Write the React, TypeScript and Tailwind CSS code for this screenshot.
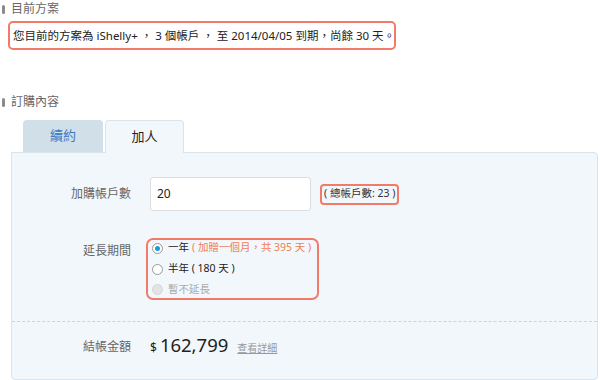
import React from 'react';

const font = { fontFamily: '"Noto Sans", "Noto Sans CJK TC", sans-serif' };

const SectionTitle = ({ children }: { children: React.ReactNode }) => (
  <div className="flex items-center gap-[6px] h-[16px]">
    <span className="w-[3px] h-[9px] rounded-full bg-[#8a8a8a]" />
    <span className="text-[12px] text-[#666]">{children}</span>
  </div>
);

const Radio = ({ checked, disabled }: { checked?: boolean; disabled?: boolean }) => (
  <span
    className={`w-[11px] h-[11px] rounded-full border flex items-center justify-center ${
      disabled ? 'border-[#d5d5d5] bg-[#e3e3e3]' : 'border-[#999] bg-white'
    }`}
  >
    {checked && <span className="w-[5px] h-[5px] rounded-full bg-[#1a9ad6]" />}
  </span>
);

export default function App() {
  return (
    <div className="w-[600px] h-[380px] bg-white relative overflow-hidden" style={font}>
      <div className="pt-[1px] pl-[2px]">
        <SectionTitle>目前方案</SectionTitle>
      </div>

      <div className="ml-[8px] mt-[4px] w-[388px] h-[29px] border-2 border-[#f27a68] rounded-[5px] flex items-center pl-[3px]">
        <span className="text-[11.5px] text-[#222] whitespace-nowrap">
          您目前的方案為 iShelly+ ， 3 個帳戶 ， 至 2014/04/05 到期，尚餘 30 天。
        </span>
      </div>

      <div className="mt-[44px] pl-[2px]">
        <SectionTitle>訂購內容</SectionTitle>
      </div>

      <div className="mt-[10px] ml-[11px] w-[587px]">
        <div className="flex pl-[12px] gap-[2px] relative z-10">
          <div className="w-[80px] h-[32px] bg-[#d1dfe9] rounded-t-[4px] flex items-center justify-center text-[13px] text-[#3f78c2]">
            續約
          </div>
          <div className="w-[79px] h-[33px] bg-[#f2f7fc] border border-b-0 border-[#d8e4ee] rounded-t-[4px] flex items-center justify-center text-[13px] text-[#222] -mb-[1px]">
            加人
          </div>
        </div>

        <div className="h-[228px] bg-[#f2f7fc] border border-[#d8e4ee] rounded-b-[4px] rounded-tr-[4px] flex flex-col">
          <div className="flex items-center mt-[24px] h-[34px]">
            <div className="w-[119px] text-right text-[12px] text-[#666]">加購帳戶數</div>
            <div className="ml-[19px] w-[161px] h-[34px] bg-white border border-[#ddd] rounded-[3px] flex items-center pl-[6px] text-[12px] text-[#222]">
              20
            </div>
            <div className="ml-[9px] h-[21px] px-[2px] border-2 border-[#f27a68] rounded-[4px] flex items-center text-[10.5px] text-[#333] whitespace-nowrap">
              ( 總帳戶數: 23 )
            </div>
          </div>

          <div className="flex items-start mt-[27px]">
            <div className="w-[119px] text-right text-[12px] text-[#666] mt-[4px]">延長期間</div>
            <div className="ml-[15px] w-[173px] h-[62px] border-2 border-[#f27a68] rounded-[7px] flex flex-col justify-center gap-[5px] pl-[4px] text-[10.5px] whitespace-nowrap">
              <div className="flex items-center gap-[5px]">
                <Radio checked />
                <span className="text-[#222]">一年</span>
                <span className="text-[#f07e55] -ml-[2px]">( 加贈一個月，共 395 天 )</span>
              </div>
              <div className="flex items-center gap-[5px]">
                <Radio />
                <span className="text-[#222]">半年 ( 180 天 )</span>
              </div>
              <div className="flex items-center gap-[5px]">
                <Radio disabled />
                <span className="text-[#aaa]">暫不延長</span>
              </div>
            </div>
          </div>

          <div className="mt-[21px] border-t border-dashed border-[#bcd9ec]" />

          <div className="flex items-center mt-[14px]">
            <div className="w-[119px] text-right text-[12px] text-[#666]">結帳金額</div>
            <div className="ml-[19px] flex items-baseline">
              <span className="text-[12px] text-[#222] mr-[3px]">$</span>
              <span className="text-[18.5px] text-[#222] leading-none">162,799</span>
              <span className="ml-[9px] text-[10px] text-[#999] underline">查看詳細</span>
            </div>
          </div>
        </div>
      </div>
    </div>
  );
}
